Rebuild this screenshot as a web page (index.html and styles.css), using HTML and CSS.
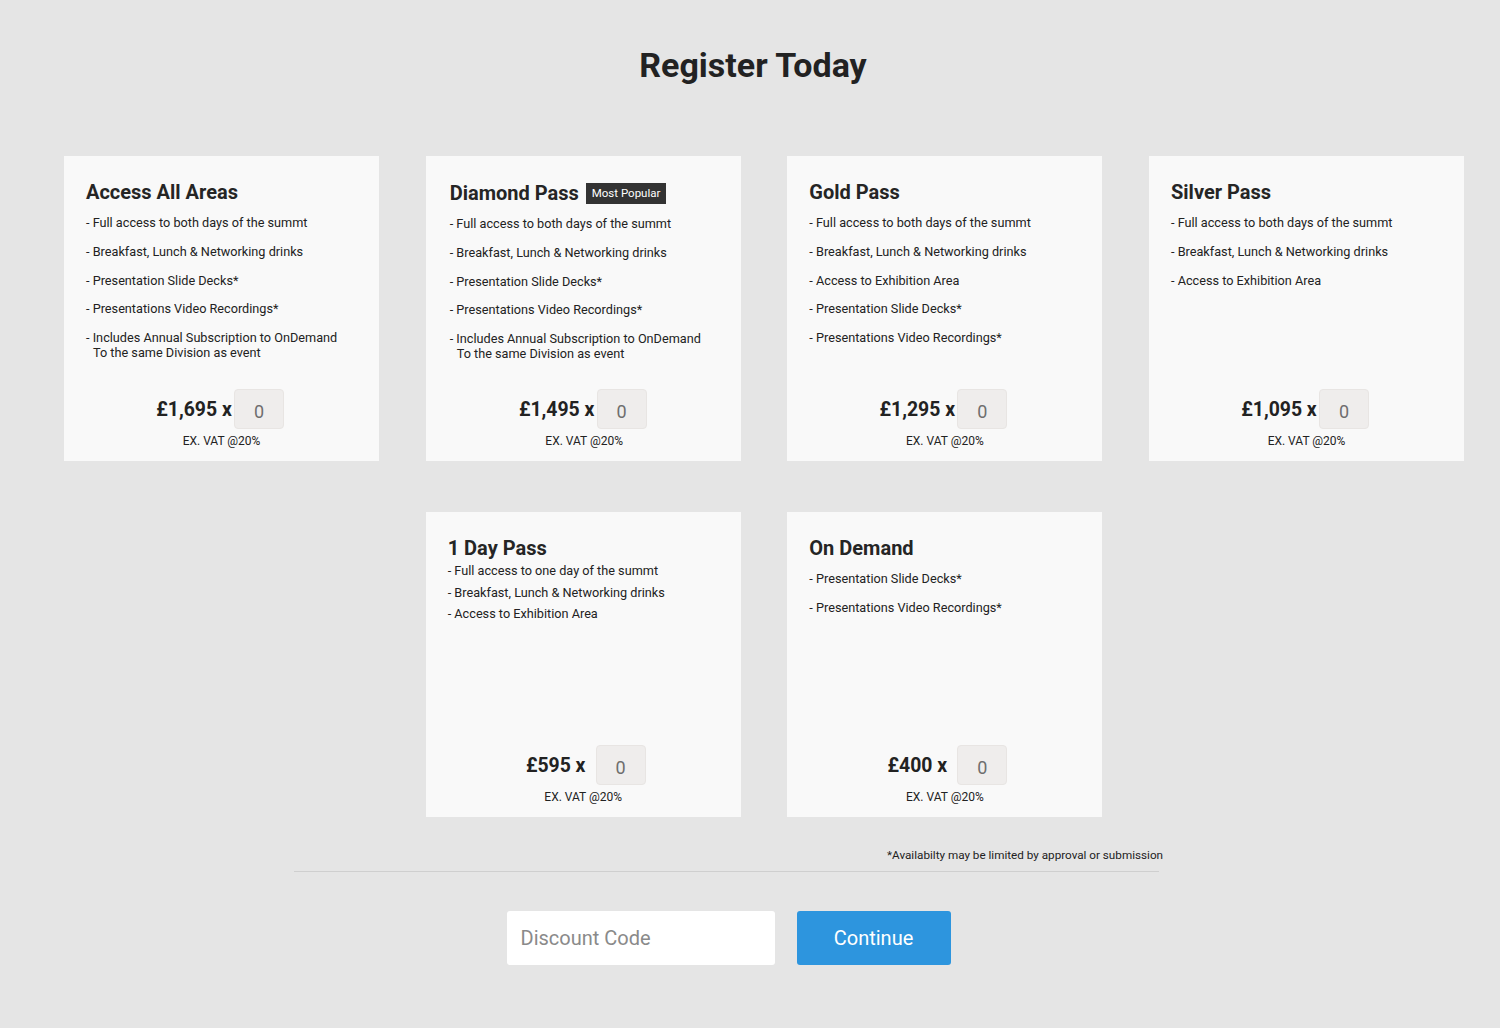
FILE: index.html
```html
<!DOCTYPE html>
<html lang="en">
<head>
<meta charset="utf-8">
<title>Register Today</title>
<link rel="stylesheet" href="styles.css">
</head>
<body>
<main class="page">
  <h1 class="page-title">Register Today</h1>

  <section class="passes">
    <article class="pass">
      <h2 class="pass-title">Access All Areas</h2>
      <ul class="features">
        <li>- Full access to both days of the summt</li>
        <li>- Breakfast, Lunch &amp; Networking drinks</li>
        <li>- Presentation Slide Decks*</li>
        <li>- Presentations Video Recordings*</li>
        <li>- Includes Annual Subscription to OnDemand<br>To the same Division as event</li>
      </ul>
      <div class="pricing">
        <div class="price-row">
          <span class="price">£1,695 x</span>
          <input class="qty" type="text" value="0" aria-label="Quantity">
        </div>
        <div class="vat">EX. VAT @20%</div>
      </div>
    </article>

    <article class="pass pass-featured">
      <h2 class="pass-title">Diamond Pass <span class="badge">Most Popular</span></h2>
      <ul class="features">
        <li>- Full access to both days of the summt</li>
        <li>- Breakfast, Lunch &amp; Networking drinks</li>
        <li>- Presentation Slide Decks*</li>
        <li>- Presentations Video Recordings*</li>
        <li>- Includes Annual Subscription to OnDemand<br>To the same Division as event</li>
      </ul>
      <div class="pricing">
        <div class="price-row">
          <span class="price">£1,495 x</span>
          <input class="qty" type="text" value="0" aria-label="Quantity">
        </div>
        <div class="vat">EX. VAT @20%</div>
      </div>
    </article>

    <article class="pass">
      <h2 class="pass-title">Gold Pass</h2>
      <ul class="features">
        <li>- Full access to both days of the summt</li>
        <li>- Breakfast, Lunch &amp; Networking drinks</li>
        <li>- Access to Exhibition Area</li>
        <li>- Presentation Slide Decks*</li>
        <li>- Presentations Video Recordings*</li>
      </ul>
      <div class="pricing">
        <div class="price-row">
          <span class="price">£1,295 x</span>
          <input class="qty" type="text" value="0" aria-label="Quantity">
        </div>
        <div class="vat">EX. VAT @20%</div>
      </div>
    </article>

    <article class="pass">
      <h2 class="pass-title">Silver Pass</h2>
      <ul class="features">
        <li>- Full access to both days of the summt</li>
        <li>- Breakfast, Lunch &amp; Networking drinks</li>
        <li>- Access to Exhibition Area</li>
      </ul>
      <div class="pricing">
        <div class="price-row">
          <span class="price">£1,095 x</span>
          <input class="qty" type="text" value="0" aria-label="Quantity">
        </div>
        <div class="vat">EX. VAT @20%</div>
      </div>
    </article>

    <article class="pass">
      <h2 class="pass-title">1 Day Pass</h2>
      <ul class="features features-compact">
        <li>- Full access to one day of the summt</li>
        <li>- Breakfast, Lunch &amp; Networking drinks</li>
        <li>- Access to Exhibition Area</li>
      </ul>
      <div class="pricing">
        <div class="price-row">
          <span class="price">£595 x</span>
          <input class="qty" type="text" value="0" aria-label="Quantity">
        </div>
        <div class="vat">EX. VAT @20%</div>
      </div>
    </article>

    <article class="pass">
      <h2 class="pass-title">On Demand</h2>
      <ul class="features">
        <li>- Presentation Slide Decks*</li>
        <li>- Presentations Video Recordings*</li>
      </ul>
      <div class="pricing">
        <div class="price-row">
          <span class="price">£400 x</span>
          <input class="qty" type="text" value="0" aria-label="Quantity">
        </div>
        <div class="vat">EX. VAT @20%</div>
      </div>
    </article>
  </section>

  <footer class="checkout">
    <p class="footnote">*Availabilty may be limited by approval or submission</p>
    <hr class="divider">
    <form class="checkout-row">
      <input class="discount" type="text" placeholder="Discount Code">
      <button class="continue" type="button">Continue</button>
    </form>
  </footer>
</main>
</body>
</html>
```

FILE: styles.css
```css
* {
  box-sizing: border-box;
}

html, body {
  margin: 0;
  padding: 0;
}

body {
  background: #e5e5e5;
  color: #222;
  font-family: Roboto, "Liberation Sans", Arial, sans-serif;
  width: 1500px;
  min-height: 1028px;
}

.page {
  padding: 45px 0 40px;
}

.page-title {
  margin: 0 0 71px;
  padding-left: 6px;
  text-align: center;
  font-size: 34px;
  line-height: 40px;
  font-weight: 700;
  color: #222;
}

.passes {
  margin-left: 64px;
  width: 1400px;
  display: flex;
  flex-wrap: wrap;
  justify-content: center;
  column-gap: 46.67px;
  row-gap: 51px;
}

.pass {
  width: 315px;
  height: 305px;
  background: #f9f9f9;
  padding: 24px 22px 13px;
  display: flex;
  flex-direction: column;
}

.pass-featured {
  padding-left: 24px;
}

.pass-title {
  margin: 0;
  display: flex;
  align-items: center;
  font-size: 20px;
  line-height: 24px;
  font-weight: 700;
  color: #252525;
}

.pass-featured .pass-title {
  padding-top: 1px;
}

.badge {
  margin-left: 7px;
  background: #333;
  color: #fff;
  font-size: 11.5px;
  line-height: 21px;
  font-weight: 400;
  padding: 0 6px;
}

.features {
  list-style: none;
  margin: 11px 0 0;
  padding: 0;
  font-size: 12.7px;
  line-height: 15px;
  color: #222;
}

.features li {
  margin-bottom: 13.75px;
  padding-left: 7px;
  text-indent: -7px;
}

.features-compact {
  margin-top: 0;
}

.features-compact li {
  margin-bottom: 0;
  line-height: 21.5px;
}

.pricing {
  margin-top: auto;
  display: flex;
  flex-direction: column;
  align-items: center;
}

.price-row {
  display: flex;
  align-items: center;
  padding-right: 5px;
}

.price {
  width: 80px;
  text-align: center;
  font-size: 19.4px;
  font-weight: 700;
  color: #222;
}

.qty {
  width: 50px;
  height: 40px;
  padding: 4px 0 0;
  border: 1px solid #e8e5e3;
  border-radius: 4px;
  background: #efedec;
  text-align: center;
  font-family: Roboto, "Liberation Sans", Arial, sans-serif;
  font-size: 18px;
  color: #6e6e6e;
}

.vat {
  margin-top: 5px;
  font-size: 12px;
  line-height: 14px;
  color: #222;
}

.checkout {
  margin-left: 294px;
  width: 869px;
  margin-top: 31px;
}

.footnote {
  margin: 0;
  text-align: right;
  font-size: 11.7px;
  line-height: 14px;
  color: #222;
}

.divider {
  margin: 9px 4px 0 0;
  border: 0;
  border-top: 1px solid #cfcfcf;
}

.checkout-row {
  margin: 39px 0 0;
  display: flex;
  justify-content: center;
  gap: 22px;
}

.discount {
  width: 268px;
  height: 54px;
  border: 0;
  border-radius: 3px;
  background: #fff;
  padding: 0 14px;
  font-family: Roboto, "Liberation Sans", Arial, sans-serif;
  font-size: 20px;
  color: #333;
}

.discount::placeholder {
  color: #8a8a8a;
}

.continue {
  width: 154px;
  height: 54px;
  border: 0;
  border-radius: 3px;
  background: #2d95de;
  color: #fff;
  font-family: Roboto, "Liberation Sans", Arial, sans-serif;
  font-size: 20px;
}
```
